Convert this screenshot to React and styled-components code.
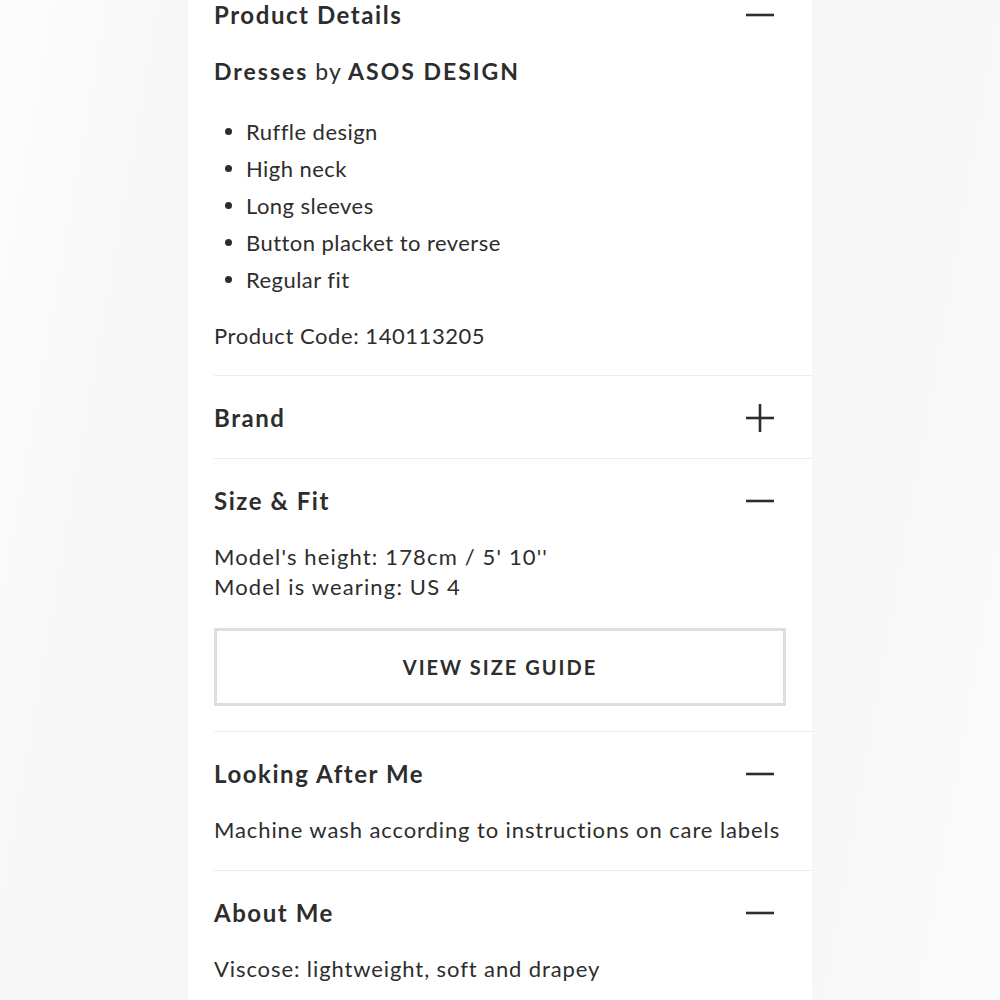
import React from "react";
import styled, { createGlobalStyle } from "styled-components";

const Global = createGlobalStyle`
  html, body { margin: 0; padding: 0; }
  body {
    font-family: Lato, "Open Sans", "Liberation Sans", sans-serif;
    color: #2d2d2d;
    background: #f8f8f8;
  }
`;

const Page = styled.div`
  width: 1000px;
  height: 1000px;
  overflow: hidden;
  display: flex;
  justify-content: center;
  background: linear-gradient(100deg, #fdfdfd 0%, #f6f6f6 18%, #f7f7f7 82%, #fbfbfb 100%);
`;

const Panel = styled.main`
  width: 624px;
  background: #ffffff;
  padding-left: 26px;
  box-sizing: border-box;
`;

const Section = styled.section`
  padding: ${(p) => (p.$first ? "0 26px 24px 0" : "27px 26px 25px 0")};
  border-top: ${(p) => (p.$first ? "none" : "1px solid #ececec")};
`;

const Header = styled.div`
  display: flex;
  align-items: center;
  justify-content: space-between;
  height: 30px;
`;

const Title = styled.h2`
  margin: 0;
  font-size: 24px;
  font-weight: 700;
  line-height: 30px;
  letter-spacing: 1.55px;
`;

const Toggle = styled.span`
  display: flex;
  width: 30px;
  height: 30px;
  margin-right: 11px;
  color: #2d2d2d;
`;

const Body = styled.div`
  margin-top: 26px;
  font-size: 22px;
  line-height: 30px;
  letter-spacing: 0.9px;
`;

const Line = styled.p`
  margin: 0;
  letter-spacing: ${(p) => (p.$tight ? "0.55px" : p.$wide ? "1.15px" : "inherit")};
`;

const Byline = styled.p`
  margin: 0;
  font-size: 23px;
  letter-spacing: 1px;
`;

const Strong = styled.strong`
  font-weight: 700;
  letter-spacing: 2px;
`;

const List = styled.ul`
  list-style: none;
  margin: 27px 0 23px;
  padding: 0;
`;

const Item = styled.li`
  display: flex;
  align-items: center;
  line-height: 37px;
  letter-spacing: 0.45px;

  &::before {
    content: "";
    width: 7px;
    height: 7px;
    border-radius: 50%;
    background: #2d2d2d;
    margin: 0 14px 0 11px;
    flex: none;
  }
`;

const GuideButton = styled.button`
  display: block;
  width: 100%;
  height: 78px;
  margin-top: 26px;
  background: #fff;
  border: 3px solid #dedede;
  font-family: inherit;
  font-size: 20px;
  font-weight: 700;
  letter-spacing: 2px;
  color: #2d2d2d;
  cursor: pointer;
`;

const Icon = ({ open }) => (
  <Toggle>
    <svg width="30" height="30" viewBox="0 0 30 30" fill="none" stroke="currentColor" strokeWidth="2.6">
      <path d="M1 15h28" />
      {!open && <path d="M15 1v28" />}
    </svg>
  </Toggle>
);

const Accordion = ({ title, open = true, first, children }) => (
  <Section $first={first}>
    <Header>
      <Title>{title}</Title>
      <Icon open={open} />
    </Header>
    {open && <Body>{children}</Body>}
  </Section>
);

const bullets = [
  "Ruffle design",
  "High neck",
  "Long sleeves",
  "Button placket to reverse",
  "Regular fit",
];

export default function App() {
  return (
    <>
      <Global />
      <Page>
        <Panel>
          <Accordion title="Product Details" first>
            <Byline>
              <Strong>Dresses</Strong> by <Strong>ASOS DESIGN</Strong>
            </Byline>
            <List>
              {bullets.map((b) => (
                <Item key={b}>{b}</Item>
              ))}
            </List>
            <Line $tight>Product Code: 140113205</Line>
          </Accordion>
          <Accordion title="Brand" open={false} />
          <Accordion title="Size &amp; Fit">
            <Line $wide>Model's height: 178cm / 5' 10''</Line>
            <Line $wide>Model is wearing: US 4</Line>
            <GuideButton>VIEW SIZE GUIDE</GuideButton>
          </Accordion>
          <Accordion title="Looking After Me">
            <Line>Machine wash according to instructions on care labels</Line>
          </Accordion>
          <Accordion title="About Me">
            <Line>Viscose: lightweight, soft and drapey</Line>
          </Accordion>
        </Panel>
      </Page>
    </>
  );
}
